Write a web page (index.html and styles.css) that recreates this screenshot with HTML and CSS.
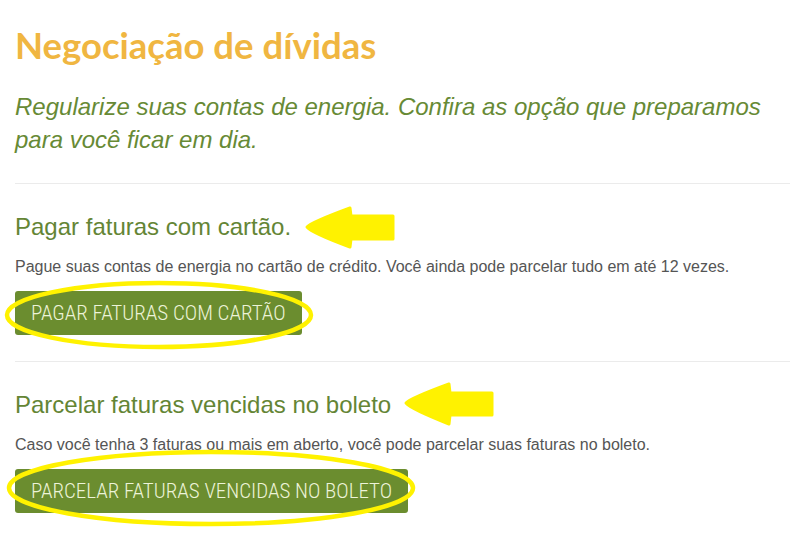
FILE: index.html
```html
<!DOCTYPE html>
<html lang="pt-BR">
<head>
<meta charset="utf-8">
<title>Negociação de dívidas</title>
<link rel="stylesheet" href="styles.css">
</head>
<body>
<main class="page">
  <h1 class="title">Negociação de dívidas</h1>
  <p class="lead">Regularize suas contas de energia. Confira as opção que preparamos para você ficar em dia.</p>

  <section class="option">
    <h2 class="option-title">Pagar faturas com cartão.</h2>
    <p class="option-text">Pague suas contas de energia no cartão de crédito. Você ainda pode parcelar tudo em até 12 vezes.</p>
    <a class="btn" href="#">PAGAR FATURAS COM CARTÃO</a>
  </section>

  <section class="option">
    <h2 class="option-title">Parcelar faturas vencidas no boleto</h2>
    <p class="option-text">Caso você tenha 3 faturas ou mais em aberto, você pode parcelar suas faturas no boleto.</p>
    <a class="btn" href="#">PARCELAR FATURAS VENCIDAS NO BOLETO</a>
  </section>
</main>

<svg class="marks" width="800" height="538" viewBox="0 0 800 538" aria-hidden="true">
  <g fill="#fff200" stroke="#fff200" stroke-linejoin="round" stroke-width="3">
    <path d="M307 227 Q312 222 350 208 L351 216 L393 216 L393 239 L351 239 L350 247 Q312 233 307 227 Z"/>
    <path d="M406 403 Q411 398 449 384 L450 393 L492 393 L492 415 L450 415 L449 424 Q411 409 406 403 Z"/>
  </g>
  <g fill="none" stroke="#fff200" stroke-width="4.5">
    <ellipse cx="159" cy="315" rx="152" ry="32"/>
    <ellipse cx="211" cy="488" rx="202" ry="36"/>
  </g>
</svg>
</body>
</html>
```

FILE: styles.css
```css
html, body {
  margin: 0;
  padding: 0;
  background: #ffffff;
}
body {
  position: relative;
  width: 800px;
  height: 538px;
  overflow: hidden;
}
.page {
  padding: 0 10px 0 15px;
  font-family: "Liberation Sans", Arial, sans-serif;
}
.title {
  margin: 0;
  padding-top: 23px;
  font-family: Lato, "Open Sans", sans-serif;
  font-weight: 700;
  font-size: 36.5px;
  line-height: 44px;
  color: #f0b641;
}
.lead {
  margin: 23px 0 0;
  font-style: italic;
  font-size: 24px;
  line-height: 33px;
  color: #678a35;
  padding-bottom: 27px;
  border-bottom: 1px solid #ebebeb;
}
.option {
  display: flex;
  flex-direction: column;
  align-items: flex-start;
  padding-top: 27px;
  padding-bottom: 26px;
  border-bottom: 1px solid #ebebeb;
}
.option:last-child {
  border-bottom: none;
}
.option-title {
  margin: 0;
  font-weight: 400;
  font-size: 24px;
  line-height: 32px;
  color: #648535;
}
.option-text {
  margin: 15px 0 0;
  font-size: 16px;
  line-height: 18px;
  color: #555555;
}
.btn {
  display: flex;
  align-items: center;
  height: 44px;
  margin-top: 15px;
  padding: 0 16px;
  border-radius: 3px;
  background: #6b8d2f;
  color: #edf3d8;
  text-decoration: none;
  font-family: "Roboto Condensed", "Liberation Sans Narrow", Roboto, sans-serif;
  font-weight: 300;
  font-size: 21px;
}
.marks {
  position: absolute;
  left: 0;
  top: 0;
  pointer-events: none;
}
```
